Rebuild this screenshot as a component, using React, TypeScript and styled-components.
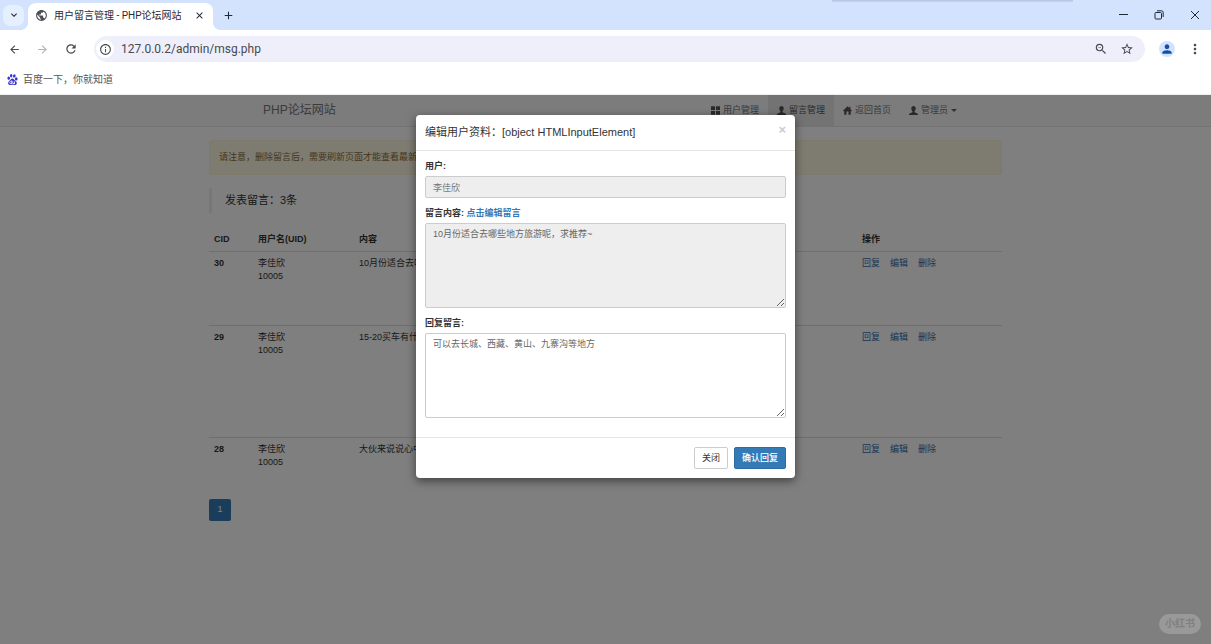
import React from "react";
import styled, { createGlobalStyle } from "styled-components";
import {
  MdArrowBack,
  MdArrowForward,
  MdRefresh,
  MdInfoOutline,
  MdPublic,
  MdOutlineZoomOut,
  MdStarOutline,
  MdPerson,
  MdMoreVert,
  MdKeyboardArrowDown,
  MdClose,
  MdAdd,
} from "react-icons/md";
import { SiBaidu } from "react-icons/si";

const uiFont = `Roboto, "Noto Sans CJK SC", sans-serif`;
const pageFont = `"Liberation Sans", "Noto Sans CJK SC", sans-serif`;

const GlobalStyle = createGlobalStyle`
  *, *::before, *::after { box-sizing: border-box; }
  body { margin: 0; font-family: ${pageFont}; font-size: 9px; line-height: 13px; color: #333; }
  button, input, textarea { font: inherit; color: inherit; margin: 0; }
  a { text-decoration: none; }
`;

const Window = styled.div`
  display: flex;
  flex-direction: column;
  min-height: 100vh;
  background: #fff;
`;

/* ---------- browser frame ---------- */

const TabStrip = styled.div`
  position: relative;
  display: flex;
  align-items: center;
  height: 30px;
  padding-left: 3px;
  background: #d3e3fd;
  color: #1f2937;
  font-family: ${uiFont};
`;

const StripShade = styled.div`
  position: absolute;
  top: 0;
  right: 138px;
  width: 241px;
  height: 2px;
  background: linear-gradient(#b4c3e0, #c8d7f2);
`;

const PlainButton = styled.button`
  display: inline-flex;
  align-items: center;
  justify-content: center;
  flex: none;
  padding: 0;
  border: 0;
  background: transparent;
`;

const TabSearch = styled(PlainButton)`
  width: 21px;
  height: 21px;
  border-radius: 7px;
  background: #e6effd;
`;

const Tab = styled.div`
  position: relative;
  display: flex;
  align-items: center;
  align-self: flex-end;
  width: 185px;
  height: 27px;
  margin-left: 4px;
  padding: 0 8px 2px 7px;
  gap: 6px;
  border-radius: 8px 8px 0 0;
  background: #fff;
  font-size: 10px;
  &::before,
  &::after {
    content: "";
    position: absolute;
    bottom: 0;
    width: 8px;
    height: 8px;
  }
  &::before {
    left: -8px;
    background: radial-gradient(circle at 0 0, transparent 8px, #fff 8px);
  }
  &::after {
    right: -8px;
    background: radial-gradient(circle at 100% 0, transparent 8px, #fff 8px);
  }
`;

const TabTitle = styled.span`
  flex: 1;
  white-space: nowrap;
`;

const NewTab = styled(PlainButton)`
  width: 16px;
  margin-left: 7px;
`;

const WindowControls = styled.div`
  display: flex;
  align-items: center;
  gap: 26px;
  margin-left: auto;
  padding-right: 11px;
`;

const Toolbar = styled.div`
  display: flex;
  align-items: center;
  height: 38px;
  padding: 0 8px;
  color: #474a4f;
  background: #fff;
`;

const NavButtons = styled.div`
  display: flex;
  gap: 15px;
  width: 86px;
`;

const Omnibox = styled.div`
  display: flex;
  align-items: center;
  flex: 1;
  height: 26px;
  padding: 0 11px 0 2px;
  border-radius: 13px;
  background: #eeeffb;
`;

const SiteInfo = styled(PlainButton)`
  width: 18px;
  height: 18px;
  border-radius: 9px;
  background: #fff;
`;

const Address = styled.input`
  flex: 1;
  min-width: 0;
  padding: 0 7px;
  border: 0;
  outline: 0;
  background: transparent;
  font-family: ${uiFont};
  font-size: 12px;
  line-height: 16px;
`;

const OmniActions = styled.div`
  display: flex;
  gap: 12px;
`;

const Avatar = styled(PlainButton)`
  width: 16px;
  height: 16px;
  margin: 0 12px 0 14px;
  border-radius: 8px;
  background: #d3e3fd;
  color: #174ea6;
`;

const Bookmarks = styled.nav`
  display: flex;
  align-items: center;
  height: 27px;
  padding: 0 7px 4px;
  border-bottom: 1px solid #eee;
  background: #fff;
`;

const Bookmark = styled.a`
  display: flex;
  align-items: center;
  gap: 5px;
  color: #555;
  font-family: ${uiFont};
  font-size: 10px;
  svg {
    color: #3a35c4;
  }
`;

/* ---------- admin page ---------- */

const Page = styled.div`
  position: relative;
  flex: 1;
  background: #fff;
`;

const Navbar = styled.header`
  border-bottom: 1px solid #e7e7e7;
  background: #f8f8f8;
`;

const NavInner = styled.div`
  display: flex;
  justify-content: space-between;
  max-width: 721px;
  height: 31px;
  margin: 0 auto;
`;

const Brand = styled.a`
  display: flex;
  align-items: center;
  padding-left: 18px;
  color: #777;
  font-size: 12px;
`;

const NavList = styled.nav`
  display: flex;
`;

const NavItem = styled.a<{ $active?: boolean }>`
  display: flex;
  align-items: center;
  gap: 3px;
  padding: 0 9px;
  background: ${(p) => (p.$active ? "#e7e7e7" : "transparent")};
  color: ${(p) => (p.$active ? "#555" : "#777")};
  svg {
    color: #555;
  }
`;

const Caret = styled.span`
  border: 3px solid transparent;
  border-top-color: #666;
  border-bottom: 0;
`;

const Container = styled.main`
  max-width: 793px;
  margin: 0 auto;
  padding: 13px 0;
`;

const Alert = styled.div`
  padding: 10px 9px;
  border: 1px solid #faf4d6;
  border-radius: 3px;
  background: #fcf8e3;
  color: #8a6d3b;
`;

const Heading = styled.h1`
  margin: 13px 0 15px;
  padding: 5px 13px;
  border-left: 3px solid #eee;
  font-size: 11px;
  font-weight: 400;
  line-height: 15px;
`;

const Table = styled.table`
  width: 100%;
  border-collapse: collapse;
  table-layout: fixed;
  text-align: left;
`;

const HeadCell = styled.th<{ $width?: number }>`
  width: ${(p) => (p.$width ? `${p.$width}px` : "auto")};
  padding: 5px;
  border-bottom: 1px solid #ddd;
`;

const Row = styled.tr<{ $height: number }>`
  height: ${(p) => p.$height}px;
  vertical-align: top;
  & + & {
    border-top: 1px solid #ddd;
  }
  th,
  td {
    padding: 5px;
  }
`;

const RowLinks = styled.div`
  display: flex;
  gap: 10px;
  a {
    color: #3c68a8;
  }
`;

const PageLink = styled.a`
  display: flex;
  align-items: center;
  justify-content: center;
  width: 22px;
  height: 22px;
  margin-top: 12px;
  border-radius: 2px;
  background: #337ab7;
  color: #fff;
`;

/* ---------- dialog ---------- */

const Backdrop = styled.div`
  position: absolute;
  inset: 0;
  padding: 20px 16px;
  background: rgba(0, 0, 0, 0.5);
`;

const Dialog = styled.form`
  max-width: 379px;
  margin: 0 auto;
  border-radius: 4px;
  background: #fff;
  box-shadow: 0 3px 10px rgba(0, 0, 0, 0.5);
`;

const DialogHeader = styled.div`
  display: flex;
  justify-content: space-between;
  align-items: flex-start;
  padding: 9px;
  border-bottom: 1px solid #e5e5e5;
`;

const DialogTitle = styled.h2`
  margin: 0;
  font-size: 11px;
  font-weight: 400;
  line-height: 17px;
`;

const CloseX = styled(PlainButton)`
  color: #ccc;
  font-size: 13px;
  font-weight: 700;
  line-height: 12px;
`;

const DialogBody = styled.div`
  padding: 9px 9px 10px;
`;

const Field = styled.div`
  margin-bottom: 9px;
`;

const Label = styled.label`
  display: block;
  margin-bottom: 3px;
  font-weight: 700;
  a {
    color: #337ab7;
  }
`;

const TextInput = styled.input`
  display: block;
  width: 100%;
  height: 22px;
  padding: 0 7px;
  border: 1px solid #ccc;
  border-radius: 2px;
  background: #eee;
  color: #777;
`;

const TextArea = styled.textarea`
  display: block;
  width: 100%;
  height: 85px;
  padding: 4px 7px;
  border: 1px solid #ccc;
  border-radius: 2px;
  background: ${(p) => (p.readOnly ? "#eee" : "#fff")};
  color: #666;
  resize: vertical;
`;

const DialogFooter = styled.div`
  display: flex;
  justify-content: flex-end;
  gap: 6px;
  padding: 9px;
  border-top: 1px solid #e5e5e5;
`;

const Button = styled.button<{ $primary?: boolean }>`
  height: 22px;
  padding: 0 7px;
  border: 1px solid ${(p) => (p.$primary ? "#2e6da4" : "#ccc")};
  border-radius: 2px;
  background: ${(p) => (p.$primary ? "#337ab7" : "#fff")};
  color: ${(p) => (p.$primary ? "#fff" : "#333")};
  font-weight: ${(p) => (p.$primary ? 500 : 400)};
`;

const Watermark = styled.div`
  position: absolute;
  right: 10px;
  bottom: 10px;
  padding: 3px 6px;
  border-radius: 10px;
  background: #999;
  color: #808080;
  font-size: 10px;
  font-weight: 700;
  line-height: 14px;
`;

/* ---------- small drawings ---------- */

const GridIcon = () => (
  <svg width="9" height="9" viewBox="0 0 9 9" fill="currentColor">
    <path d="M0 .3h4v3.8H0zM5 .3h4v3.8H5zM0 4.9h4v3.8H0zM5 4.9h4v3.8H5z" />
  </svg>
);

const UserIcon = () => (
  <svg width="9" height="9" viewBox="0 0 18 18" fill="currentColor">
    <path d="M9 0C6.3 0 4.600 1.900 4.600 4.400c0 2.600 1 4.900 2.300 6.100v1.500c0 .5-.4.9-1.100 1.200L1.300 15.100C.5 15.500 0 16 0 17v1h18v-1c0-1-.5-1.500-1.300-1.900l-4.500-1.900c-.7-.3-1.100-.7-1.100-1.200v-1.500C12.400 9.300 13.400 7 13.400 4.400 13.400 1.900 11.700 0 9 0z" />
  </svg>
);

const HomeIcon = () => (
  <svg width="9" height="9" viewBox="0 0 18 18" fill="currentColor">
    <path d="M9 .5 12.500 4V1.500H15v5l3 3.200-1 1-1.500-.1V17.500H11V11H7v6.500H2.500v-6.900L1 10.700 0 9.700z" />
  </svg>
);

const MinimizeIcon = () => (
  <svg width="9" height="10" viewBox="0 0 9 10" stroke="#1f2937">
    <path d="M0 4.500h9" />
  </svg>
);

const RestoreIcon = () => (
  <svg width="10" height="10" viewBox="0 0 10 10" fill="none" stroke="#1f2937">
    <rect x="1" y="2.500" width="6.500" height="6.500" rx="1" />
    <path d="M3 .8h4.500a1.700 1.700 0 0 1 1.700 1.700V7" />
  </svg>
);

const CloseIcon = () => (
  <svg width="10" height="10" viewBox="0 0 10 10" stroke="#1f2937">
    <path d="M1 1l8 8M9 1L1 9" />
  </svg>
);

/* ---------- data ---------- */

const messages = [
  { cid: 30, text: "10月份适合去哪些地方旅游呢，求推荐~", height: 74 },
  { cid: 29, text: "15-20买车有什么", height: 112 },
  { cid: 28, text: "大伙来说说心中", height: 49 },
];

export default function App() {
  return (
    <Window>
      <GlobalStyle />
      <TabStrip>
        <StripShade />
        <TabSearch aria-label="搜索标签页">
          <MdKeyboardArrowDown size={12} />
        </TabSearch>
        <Tab>
          <MdPublic size={13} color="#4b4f55" />
          <TabTitle>用户留言管理 - PHP论坛网站</TabTitle>
          <PlainButton aria-label="关闭标签页">
            <MdClose size={11} />
          </PlainButton>
        </Tab>
        <NewTab aria-label="新标签页">
          <MdAdd size={13} />
        </NewTab>
        <WindowControls>
          <PlainButton aria-label="最小化">
            <MinimizeIcon />
          </PlainButton>
          <PlainButton aria-label="还原">
            <RestoreIcon />
          </PlainButton>
          <PlainButton aria-label="关闭窗口">
            <CloseIcon />
          </PlainButton>
        </WindowControls>
      </TabStrip>

      <Toolbar>
        <NavButtons>
          <PlainButton aria-label="后退">
            <MdArrowBack size={13} />
          </PlainButton>
          <PlainButton aria-label="前进">
            <MdArrowForward size={13} color="#b0b2b6" />
          </PlainButton>
          <PlainButton aria-label="重新加载">
            <MdRefresh size={14} />
          </PlainButton>
        </NavButtons>
        <Omnibox>
          <SiteInfo aria-label="网站信息">
            <MdInfoOutline size={13} />
          </SiteInfo>
          <Address aria-label="地址" defaultValue="127.0.0.2/admin/msg.php" />
          <OmniActions>
            <PlainButton aria-label="缩放">
              <MdOutlineZoomOut size={14} />
            </PlainButton>
            <PlainButton aria-label="收藏">
              <MdStarOutline size={14} />
            </PlainButton>
          </OmniActions>
        </Omnibox>
        <Avatar aria-label="用户">
          <MdPerson size={14} />
        </Avatar>
        <PlainButton aria-label="菜单">
          <MdMoreVert size={16} />
        </PlainButton>
      </Toolbar>

      <Bookmarks>
        <Bookmark href="#">
          <SiBaidu size={11} />
          百度一下，你就知道
        </Bookmark>
      </Bookmarks>

      <Page>
        <Navbar>
          <NavInner>
            <Brand href="#">PHP论坛网站</Brand>
            <NavList>
              <NavItem href="#">
                <GridIcon />
                用户管理
              </NavItem>
              <NavItem href="#" $active>
                <UserIcon />
                留言管理
              </NavItem>
              <NavItem href="#">
                <HomeIcon />
                返回首页
              </NavItem>
              <NavItem href="#">
                <UserIcon />
                管理员
                <Caret />
              </NavItem>
            </NavList>
          </NavInner>
        </Navbar>

        <Container>
          <Alert>请注意，删除留言后，需要刷新页面才能查看最新</Alert>
          <Heading>发表留言：3条</Heading>
          <Table>
            <thead>
              <tr>
                <HeadCell $width={44}>CID</HeadCell>
                <HeadCell $width={101}>用户名(UID)</HeadCell>
                <HeadCell>内容</HeadCell>
                <HeadCell $width={145}>操作</HeadCell>
              </tr>
            </thead>
            <tbody>
              {messages.map((m) => (
                <Row key={m.cid} $height={m.height}>
                  <th scope="row">{m.cid}</th>
                  <td>
                    李佳欣
                    <br />
                    10005
                  </td>
                  <td>{m.text}</td>
                  <td>
                    <RowLinks>
                      <a href="#">回复</a>
                      <a href="#">编辑</a>
                      <a href="#">删除</a>
                    </RowLinks>
                  </td>
                </Row>
              ))}
            </tbody>
          </Table>
          <PageLink href="#">1</PageLink>
        </Container>

        <Backdrop>
          <Dialog role="dialog" aria-labelledby="dialog-title" onSubmit={(e) => e.preventDefault()}>
            <DialogHeader>
              <DialogTitle id="dialog-title">编辑用户资料：[object HTMLInputElement]</DialogTitle>
              <CloseX type="button" aria-label="关闭">
                ×
              </CloseX>
            </DialogHeader>
            <DialogBody>
              <Field>
                <Label htmlFor="user">用户:</Label>
                <TextInput id="user" readOnly value="李佳欣" />
              </Field>
              <Field>
                <Label htmlFor="content">
                  留言内容: <a href="#">点击编辑留言</a>
                </Label>
                <TextArea id="content" readOnly value="10月份适合去哪些地方旅游呢，求推荐~" />
              </Field>
              <Field>
                <Label htmlFor="reply">回复留言:</Label>
                <TextArea id="reply" defaultValue="可以去长城、西藏、黄山、九寨沟等地方" />
              </Field>
            </DialogBody>
            <DialogFooter>
              <Button type="button">关闭</Button>
              <Button type="submit" $primary>
                确认回复
              </Button>
            </DialogFooter>
          </Dialog>
        </Backdrop>
        <Watermark>小红书</Watermark>
      </Page>
    </Window>
  );
}
